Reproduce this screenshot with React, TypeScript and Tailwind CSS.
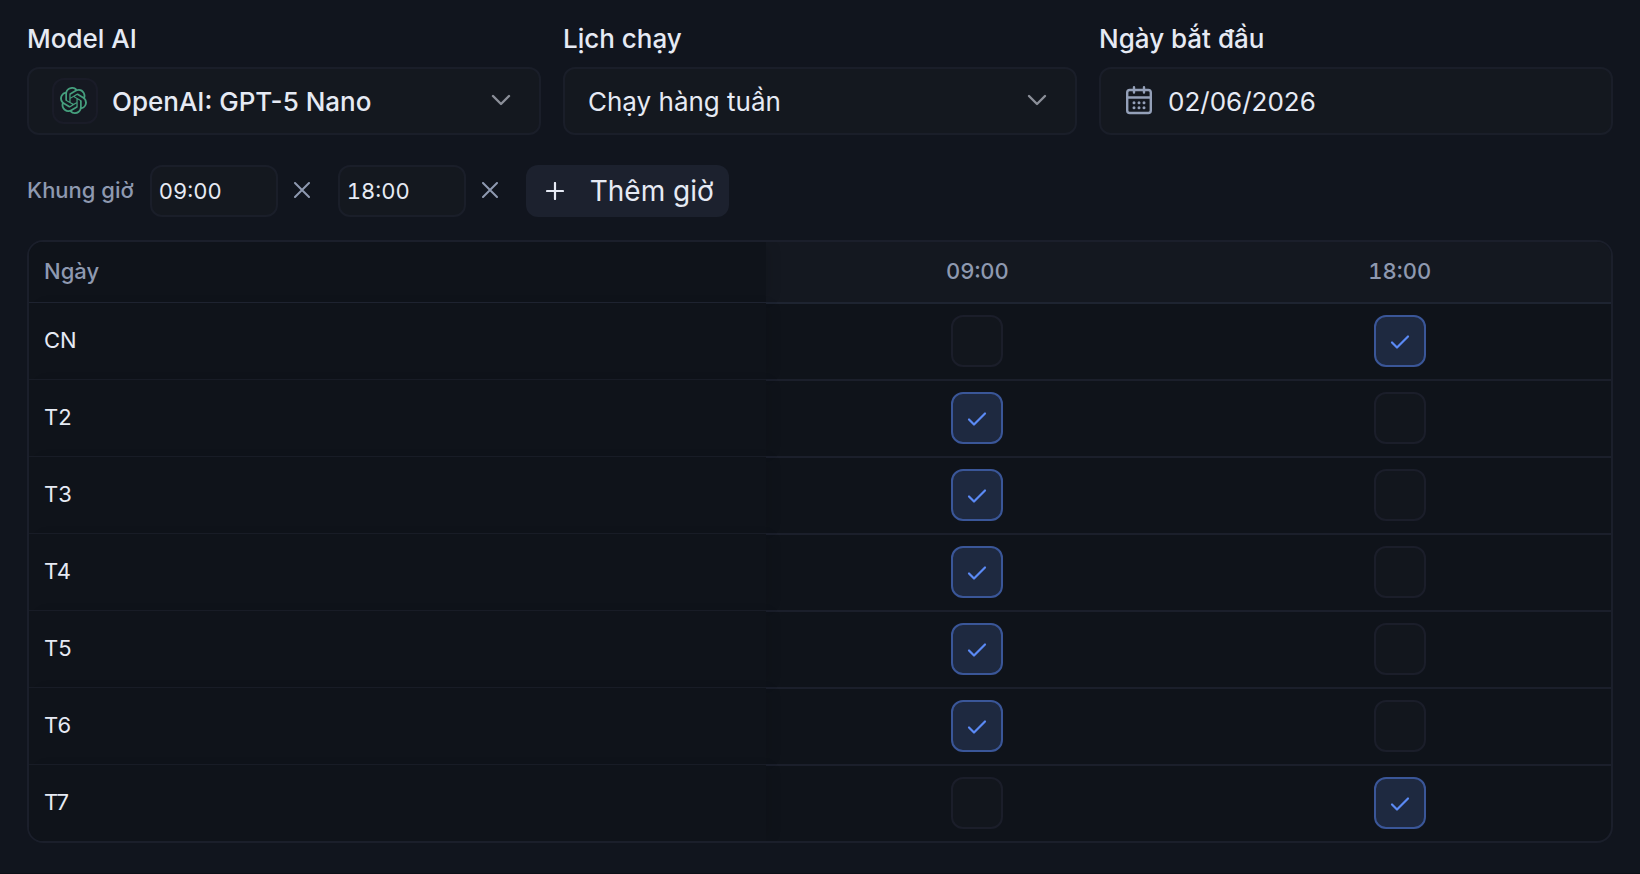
import { useState } from "react";
import type { ReactNode } from "react";
import { SiOpenai } from "react-icons/si";

const DAYS = ["CN", "T2", "T3", "T4", "T5", "T6", "T7"];
const TIMES = ["09:00", "18:00"];
const INITIAL = ["CN-1", "T2-0", "T3-0", "T4-0", "T5-0", "T6-0", "T7-1"];

function ChevronIcon() {
  return (
    <svg aria-hidden="true" className="pointer-events-none size-8 shrink-0 text-[#8b8f98]" viewBox="0 0 32 32" fill="none" stroke="currentColor" strokeWidth="2.4" strokeLinecap="round" strokeLinejoin="round">
      <path d="M8 11l8 8 8-8" />
    </svg>
  );
}

function CalendarIcon() {
  return (
    <svg aria-hidden="true" className="h-[30px] w-[26px] shrink-0 text-[#94a0b8]" viewBox="0 0 26 30" fill="none" stroke="currentColor" strokeWidth="2.4" strokeLinecap="round">
      <rect x="1.2" y="4" width="23.6" height="23" rx="2.6" />
      <path d="M8 1.2v5.3M18 1.2v5.3M1.2 11.5h23.6" />
      <path d="M8 16.8h.01M13 16.8h.01M18 16.8h.01M8 21.8h.01M13 21.8h.01M18 21.8h.01" strokeWidth="3" />
    </svg>
  );
}

function CrossIcon() {
  return (
    <svg aria-hidden="true" className="size-4" viewBox="0 0 16 16" fill="none" stroke="currentColor" strokeWidth="2" strokeLinecap="round">
      <path d="M1 1l14 14M15 1L1 15" />
    </svg>
  );
}

function PlusIcon() {
  return (
    <svg aria-hidden="true" className="size-[18px]" viewBox="0 0 18 18" fill="none" stroke="currentColor" strokeWidth="2.2" strokeLinecap="round">
      <path d="M9 1v16M1 9h16" />
    </svg>
  );
}

function Field({ id, label, children }: { id: string; label: string; children: ReactNode }) {
  return (
    <div className="flex min-w-0 flex-col gap-3">
      <label htmlFor={id} className="text-[26px] leading-8 font-medium">{label}</label>
      <div className="flex h-[68px] items-center rounded-xl border-2 border-[#1a1e29] bg-[#14181f] pr-[22px] pl-[23px]">{children}</div>
    </div>
  );
}

export default function App() {
  const [selected, setSelected] = useState(() => new Set(INITIAL));

  const toggle = (key: string) =>
    setSelected((current) => {
      const next = new Set(current);
      if (!next.delete(key)) next.add(key);
      return next;
    });

  return (
    <main className="min-h-screen border-b border-[#0c0f16] bg-[#11151e] px-[27px] pt-[23px] pb-[30px] font-['Inter',sans-serif] text-[#e6eaf4]">
      <div className="grid grid-cols-3 gap-[22px]">
        <Field id="model" label="Model AI">
          <span className="flex size-[46px] shrink-0 items-center justify-center rounded-xl border-2 border-[#1a1c28] bg-[#151821] pr-1 pb-0.5 text-[#459f7d]">
            <SiOpenai size={27} className="shrink-0" />
          </span>
          <select id="model" className="min-w-0 flex-1 appearance-none bg-transparent pl-[14px] text-[26px] font-medium outline-none">
            <option>OpenAI: GPT-5 Nano</option>
          </select>
          <ChevronIcon />
        </Field>
        <Field id="schedule" label="Lịch chạy">
          <select id="schedule" className="min-w-0 flex-1 appearance-none bg-transparent text-[26px] outline-none">
            <option>Chạy hàng tuần</option>
          </select>
          <ChevronIcon />
        </Field>
        <Field id="start" label="Ngày bắt đầu">
          <span className="pl-0.5"><CalendarIcon /></span>
          <input id="start" type="text" defaultValue="02/06/2026" className="min-w-0 flex-1 bg-transparent pl-4 text-[26px] outline-none" />
        </Field>
      </div>

      <div className="mt-[30px] flex items-center">
        <span className="pr-4 pb-0.5 text-[22px] font-medium text-[#8e99b0]">Khung giờ</span>
        {TIMES.map((time) => (
          <div key={time} className="mr-5 flex items-center gap-2">
            <input type="text" aria-label="Khung giờ" defaultValue={time} className="h-[52px] w-32 rounded-xl border-2 border-[#1a1e29] bg-[#14181f] px-[7px] text-[22px] tabular-nums outline-none" />
            <button type="button" aria-label={`Xóa ${time}`} className="flex size-8 items-center justify-center pb-0.5 text-[#8e99b0]">
              <CrossIcon />
            </button>
          </div>
        ))}
        <button type="button" className="flex h-[52px] items-center gap-[26px] rounded-xl bg-[#1c212e] pr-[15px] pl-5 text-[28px]">
          <PlusIcon />
          Thêm giờ
        </button>
      </div>

      <div className="mt-[23px] overflow-hidden rounded-2xl border-2 border-[#1b1f2b] bg-[#0f131a]">
        <table className="w-full table-fixed border-separate border-spacing-0 text-[22px]">
          <thead>
            <tr className="h-[60px] text-[#8e99b0]">
              <th scope="col" className="relative z-10 w-[46.6%] bg-[#0f131a] px-[15px] pt-0 pb-0.5 text-left font-medium shadow-[8px_0_12px_-4px_rgba(0,0,0,0.1)]">Ngày</th>
              {TIMES.map((time) => (
                <th key={time} scope="col" className="bg-[#141820] pt-0 pb-0.5 font-medium tabular-nums">{time}</th>
              ))}
            </tr>
          </thead>
          <tbody>
            {DAYS.map((day, row) => (
              <tr key={day} className="h-[77px]">
                <th scope="row" className={`relative z-10 border-t bg-[#0f131a] px-[15px] pt-0 pb-0.5 text-left font-normal shadow-[8px_0_12px_-4px_rgba(0,0,0,0.1)] ${row === 0 ? "border-[#1e2330]" : "border-[#181c26]"}`}>{day}</th>
                {TIMES.map((time, column) => {
                  const key = `${day}-${column}`;
                  return (
                    <td key={time} className={`border-t-2 p-0 pb-0.5 ${row === 0 ? "border-[#1e2431]" : "border-[#1b1f2b]"}`}>
                      <label className="mx-auto grid size-[52px] place-items-center">
                        <input
                          type="checkbox"
                          aria-label={`${day} ${time}`}
                          checked={selected.has(key)}
                          onChange={() => toggle(key)}
                          className="peer col-start-1 row-start-1 size-[52px] appearance-none rounded-xl border-2 border-[#1b1e2a] bg-[#12161d] checked:border-[#3a5698] checked:bg-[#1e2940]"
                        />
                        <svg aria-hidden="true" className="pointer-events-none invisible col-start-1 row-start-1 size-6 text-[#5b8af5] peer-checked:visible" viewBox="0 0 24 24" fill="none" stroke="currentColor" strokeWidth="2.2" strokeLinecap="round" strokeLinejoin="round">
                          <path d="M4 13.5l5 5 11-11" />
                        </svg>
                      </label>
                    </td>
                  );
                })}
              </tr>
            ))}
          </tbody>
        </table>
      </div>
    </main>
  );
}
